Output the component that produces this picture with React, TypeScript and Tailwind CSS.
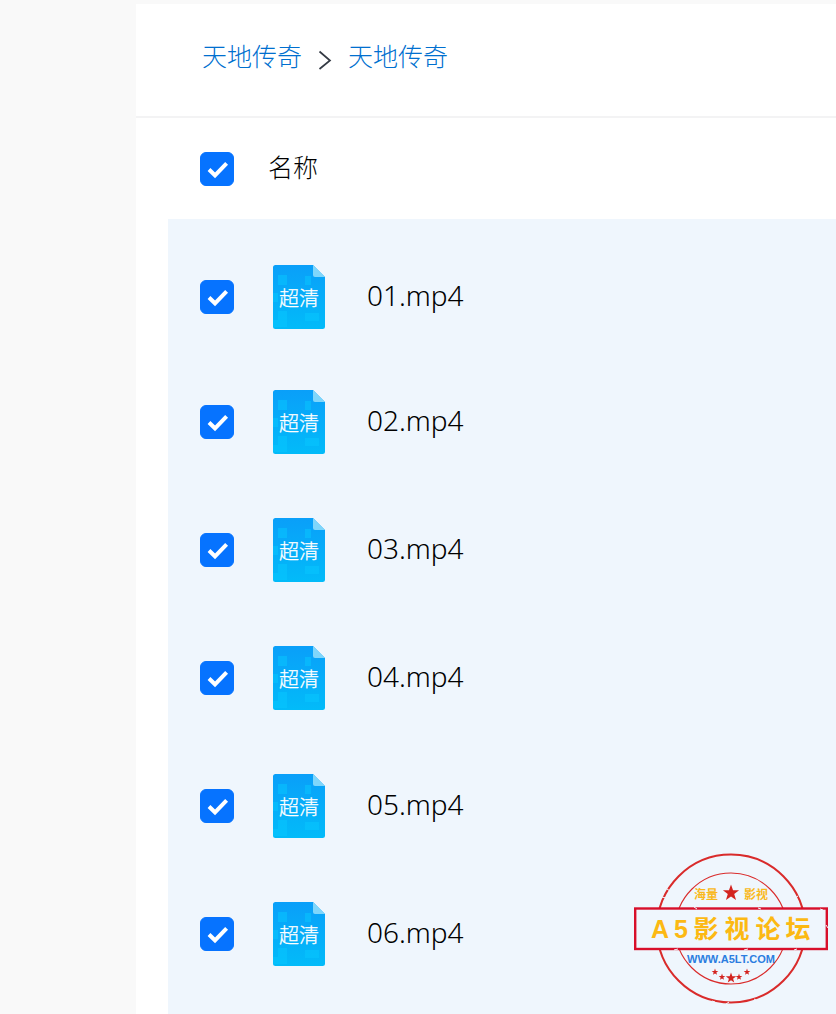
import React from 'react';

const files = ['01.mp4', '02.mp4', '03.mp4', '04.mp4', '05.mp4', '06.mp4'];

const folders = ['天地传奇', '天地传奇'];

const CheckBox: React.FC<{ label: string }> = ({ label }) => (
  <span className="relative block size-[34px] shrink-0">
    <input
      type="checkbox"
      aria-label={label}
      defaultChecked
      className="peer block size-full cursor-pointer appearance-none rounded-md border border-gray-300 bg-white checked:border-[#0673ff] checked:bg-[#0673ff]"
    />
    <svg
      viewBox="0 0 34 34"
      fill="none"
      stroke="#fff"
      strokeWidth="4"
      className="pointer-events-none absolute inset-0 hidden peer-checked:block"
    >
      <path d="M9 17.5l6 5.8L26.6 11.3" />
    </svg>
  </span>
);

const VideoIcon: React.FC = () => (
  <svg viewBox="0 0 52 64" className="h-16 w-[52px] shrink-0" aria-hidden="true">
    <defs>
      <linearGradient id="sheet" x1="0" y1="0" x2="0" y2="1">
        <stop offset="0" stopColor="#0a9ff9" />
        <stop offset="1" stopColor="#02bbf9" />
      </linearGradient>
    </defs>
    <path d="M2.5 0H40L52 12V61.5A2.5 2.5 0 0 1 49.5 64H2.5A2.5 2.5 0 0 1 0 61.5V2.5A2.5 2.5 0 0 1 2.5 0Z" fill="url(#sheet)" />
    <g fill="#08c8ff" opacity="0.5">
      <path d="M5 10h9v10H5zM32 11h6v9h-6zM0 28h5v9H0zM0 55h14v7H0zM5 46h9v9H5zM32 48h14v8H32z" />
    </g>
    <path d="M40 0L52 12H42A2 2 0 0 1 40 10Z" fill="#7fd6fb" />
    <text
      x="26"
      y="41"
      textAnchor="middle"
      fontSize="20"
      fontWeight="300"
      fill="#fff"
      stroke="#fff"
      strokeWidth="0.3"
      fontFamily="'Noto Sans CJK SC', sans-serif"
    >
      超清
    </text>
  </svg>
);

const STAR = 'M0-10L2.4-3.2 9.5-3.1 3.8 1.2 5.9 8.1 0 4 -5.9 8.1 -3.8 1.2 -9.5-3.1 -2.4-3.2Z';

const stars = [
  { x: 97, y: 40, s: 0.85 },
  { x: 81, y: 119, s: 0.35 },
  { x: 88, y: 124, s: 0.35 },
  { x: 97, y: 125, s: 0.55 },
  { x: 105, y: 124, s: 0.35 },
  { x: 113, y: 119, s: 0.35 },
];

const stampTitle = [
  { char: 'A', x: 26 },
  { char: '5', x: 47 },
  { char: '影', x: 72 },
  { char: '视', x: 103 },
  { char: '论', x: 134 },
  { char: '坛', x: 164 },
];

const Stamp: React.FC = () => (
  <svg
    viewBox="0 0 194 151"
    className="pointer-events-none absolute right-2 bottom-[10px] h-[151px] w-[194px]"
    fontFamily="'Liberation Sans', 'Noto Sans CJK SC', sans-serif"
    fontWeight="700"
  >
    <circle cx="97" cy="75.5" r="74" fill="none" stroke="#d92b2b" strokeWidth="2" />
    <circle cx="97" cy="75.5" r="55.5" fill="none" stroke="#d92b2b" strokeWidth="1.1" />
    <rect x="1.2" y="55.5" width="191.6" height="40.5" fill="#eff6fd" stroke="#d80f2a" strokeWidth="2.4" />
    <g fill="none" stroke="#eff6fd" strokeWidth="1">
      <path d="M28 44l4 1M33 36l3 2M164 43l-3 2M78 148l3 1M92 151l3-2M120 146l2 1M60 54l3 2M124 55l3 1M186 56l3 1M40 97l4-1M110 97l4-1M160 97l3-1M192 72l2 3" />
    </g>
    {stars.map(({ x, y, s }) => (
      <path key={x + '-' + y} d={STAR} fill="#d3231f" transform={`translate(${x} ${y}) scale(${s})`} />
    ))}
    <g fill="#f9b91c" fontSize="12" textAnchor="middle">
      <text x="72" y="46">海量</text>
      <text x="122" y="46">影视</text>
    </g>
    <g fill="#fcb913" fontSize="25" textAnchor="middle">
      {stampTitle.map(({ char, x }) => (
        <text key={char} x={x} y="85">
          {char}
        </text>
      ))}
    </g>
    <text x="97" y="110" textAnchor="middle" fontSize="11" fill="#2b7de0">
      WWW.A5LT.COM
    </text>
  </svg>
);

const Breadcrumb: React.FC = () => (
  <nav className="flex h-[114px] items-center gap-4 border-b-2 border-[#f3f3f4] px-[66px] pb-2">
    {folders.map((name, i) => (
      <React.Fragment key={i}>
        {i > 0 && (
          <svg viewBox="0 0 14 20" className="mt-2 h-5 w-[14px]" fill="none" stroke="#343a44" strokeWidth="1.7">
            <path d="M1.5 1.5L12 10.5 1.5 19" />
          </svg>
        )}
        <a href="#" className="text-[25px] leading-8 font-light text-[#006fcf]">
          {name}
        </a>
      </React.Fragment>
    ))}
  </nav>
);

const App: React.FC = () => {
  return (
    <div className="relative flex min-h-screen bg-[#f9f9f9] pt-1 font-['Noto_Sans','Noto_Sans_CJK_SC',sans-serif]">
      <aside className="w-[136px] shrink-0" />
      <main className="flex min-w-0 flex-1 flex-col bg-white">
        <Breadcrumb />
        <div className="flex h-[101px] items-center gap-[34px] px-16">
          <CheckBox label="全选" />
          <span className="pb-1 text-[25px] leading-8 font-light text-black">名称</span>
        </div>
        <ul className="ml-8 flex-1 bg-[#eff6fd] pt-[17px]">
          {files.map((name) => (
            <li key={name} className="flex h-32 items-center px-8 first:h-[122px]">
              <CheckBox label={name} />
              <div className="ml-[39px] flex items-center gap-[42px]">
                <VideoIcon />
                <span className="pb-1 text-[28px] leading-9 font-light text-black">{name}</span>
              </div>
            </li>
          ))}
        </ul>
      </main>
      <Stamp />
    </div>
  );
};

export default App;
